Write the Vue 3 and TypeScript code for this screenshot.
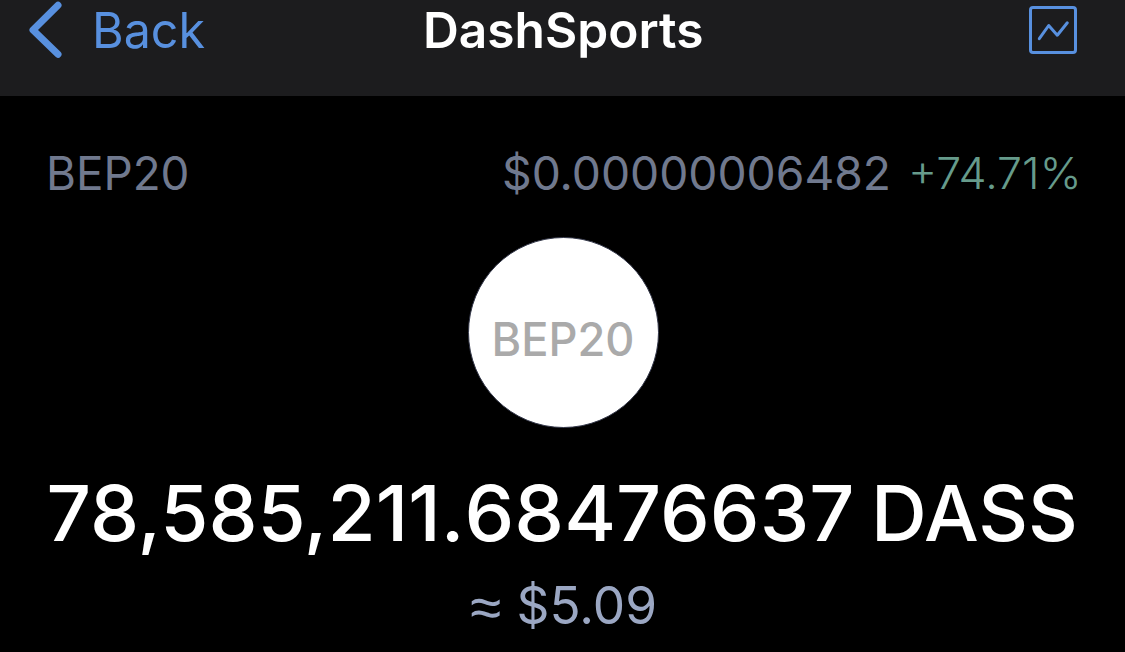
<script setup lang="ts">
const network = 'BEP20'
const price = '$0.00000006482'
const change = '+74.71%'
const amount = [
  { text: '78,585,', x: -2.5, width: 281 },
  { text: '211.', x: 278.5, width: 137 },
  { text: '68476637', x: 415.5, width: 390 },
]
const symbol = 'DASS'
const value = '$5.09'
</script>

<template>
  <main class="screen">
    <header class="bar">
      <button class="back">
        <svg class="chevron" viewBox="0 0 34 58"><path d="M30 5.3 5 30l25 24.3" /></svg>
        <svg class="t back-t" width="114" height="60"><text x="0" y="47" textLength="113" lengthAdjust="spacingAndGlyphs">Back</text></svg>
      </button>
      <svg class="t title" width="280" height="60"><text x="-1" y="47" textLength="280.5" lengthAdjust="spacingAndGlyphs">DashSports</text></svg>
      <svg class="chart" viewBox="0 0 48 48"><rect x="1.5" y="1.5" width="45" height="45" rx="2.5" /><path d="M10.3 32.7 19.7 19.5 28.3 29.2 38.3 16.8" /></svg>
    </header>
    <section class="meta">
      <svg class="t meta-t" width="142" height="60"><text x="-1" y="47" textLength="143.5" lengthAdjust="spacingAndGlyphs">{{ network }}</text></svg>
      <div class="quote">
        <svg class="t meta-t" width="388" height="60"><text x="0" y="47" textLength="389" lengthAdjust="spacingAndGlyphs">{{ price }}</text></svg>
        <svg class="t change" width="168" height="60"><text x="-2" y="46" textLength="173.5" lengthAdjust="spacingAndGlyphs">{{ change }}</text></svg>
      </div>
    </section>
    <div class="token"><svg class="t token-t" width="142" height="60"><text x="-0.5" y="47" textLength="143" lengthAdjust="spacingAndGlyphs">{{ network }}</text></svg></div>
    <svg class="t balance" width="1027" height="90">
      <text v-for="part in amount" :key="part.text" :x="part.x" y="69" :textLength="part.width" lengthAdjust="spacingAndGlyphs">{{ part.text }}</text>
      <text x="822" y="69" textLength="207" lengthAdjust="spacingAndGlyphs">{{ symbol }}</text>
    </svg>
    <svg class="t value" width="186" height="60">
      <text class="approx" x="0" y="50" textLength="31" lengthAdjust="spacingAndGlyphs">≈</text>
      <text x="46.5" y="47" textLength="140.5" lengthAdjust="spacingAndGlyphs">{{ value }}</text>
    </svg>
  </main>
</template>

<style>
body { margin: 0; background: #000; overflow: hidden; }
</style>
<style scoped>
.screen { width: 1125px; height: 652px; background: #000; font-family: Inter, "Liberation Sans", sans-serif; display: flex; flex-direction: column; align-items: center; overflow: hidden; }
.t { display: block; overflow: visible; flex: none; }
.bar { width: 1125px; height: 96px; background: #1c1c1e; display: grid; grid-template-columns: 424px 280px 421px; flex: none; }
.back { display: flex; border: 0; background: none; padding: 0 0 0 28px; gap: 30px; align-items: flex-start; font-family: inherit; }
.chevron { width: 34px; height: 58px; fill: none; stroke: #5890df; stroke-width: 7; stroke-linecap: round; stroke-linejoin: round; }
.back-t { fill: #5890df; font-size: 49.5px; margin-top: 1px; }
.title { fill: #fff; font-size: 49.5px; font-weight: 600; margin-top: 1px; }
.chart { width: 48px; height: 48px; margin: 6px 48px 0 auto; fill: none; stroke: #5890df; stroke-width: 3; stroke-linecap: round; stroke-linejoin: round; }
.meta { width: 1031px; height: 142px; display: flex; justify-content: space-between; flex: none; padding-top: 47px; box-sizing: border-box; }
.quote { display: flex; gap: 20px; }
.meta-t { fill: #70798e; font-size: 46.8px; }
.change { fill: #669b8b; font-size: 43.5px; font-weight: 300; }
.token { width: 189px; height: 189px; border: 1px solid #34384a; border-radius: 50%; background: #fff; display: flex; justify-content: center; flex: none; margin: -1px 0 0 1px; }
.token-t { fill: #aaa; font-size: 46px; font-weight: 500; margin-top: 71px; }
.balance { fill: #fff; font-size: 77px; font-weight: 500; margin-top: 44px; }
.value { fill: #9ba7c3; font-size: 52px; margin-top: 15px; }
.approx { font-family: "Liberation Sans", sans-serif; font-size: 57px; }
</style>
